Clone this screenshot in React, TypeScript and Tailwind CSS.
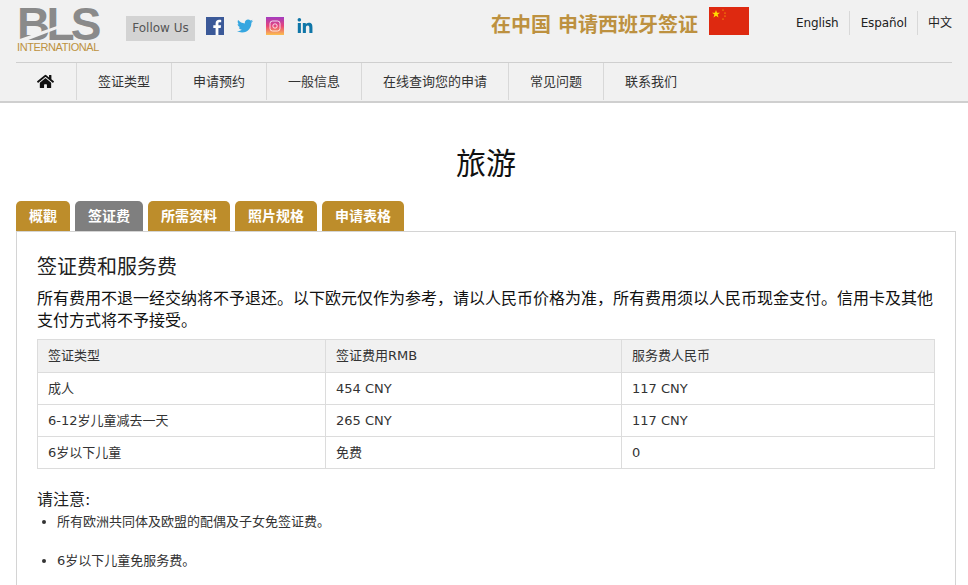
import { FaTwitter, FaLinkedinIn, FaHome } from 'react-icons/fa'

const font = "font-['DejaVu_Sans','Noto_Sans_CJK_SC',sans-serif]"

const navItems = ['签证类型', '申请预约', '一般信息', '在线查询您的申请', '常见问题', '联系我们']
const tabs = ['概觀', '签证费', '所需资料', '照片规格', '申请表格']
const rows = [
  ['成人', '454 CNY', '117 CNY'],
  ['6-12岁儿童减去一天', '265 CNY', '117 CNY'],
  ['6岁以下儿童', '免费', '0'],
]

function Logo() {
  return (
    <div className="relative w-[84px] h-[48px] mt-[6px] ml-[17px] shrink-0">
      <div className="h-[36px] text-[46px] leading-[36px] font-bold text-[#8a8a8a] tracking-[-3.8px] font-['Liberation_Sans',sans-serif]">
        BLS
      </div>
      <svg className="absolute left-0 top-[16px]" width="84" height="24" viewBox="0 0 84 24">
        <path d="M0 18 L40 4 L40 7 L6 20 L0 21 Z" fill="#f1f1f1" />
      </svg>
      <div className="text-[11px] leading-[11px] text-[#bd9140] tracking-[-0.4px] font-['Liberation_Sans',sans-serif]">
        INTERNATIONAL
      </div>
    </div>
  )
}

function Flag() {
  return (
    <svg width="40" height="28" viewBox="0 0 40 28" className="shrink-0">
      <rect width="40" height="28" fill="#de2910" />
      <polygon points="7,3 8,5.8 11,5.8 8.6,7.6 9.5,10.5 7,8.8 4.5,10.5 5.4,7.6 3,5.8 6,5.8" fill="#ffde00" />
      <circle cx="14" cy="3" r="0.6" fill="#ffde00" />
      <circle cx="16" cy="6" r="0.6" fill="#ffde00" />
      <circle cx="16" cy="9" r="0.6" fill="#ffde00" />
      <circle cx="14" cy="12" r="0.6" fill="#ffde00" />
    </svg>
  )
}

function Facebook() {
  return (
    <svg width="18" height="18" viewBox="0 0 18 18">
      <rect width="18" height="18" fill="#3b5998" />
      <path d="M12.4 18V11h2.3l.4-2.7h-2.7V6.6c0-.8.2-1.3 1.3-1.3h1.5V2.9c-.3 0-1.1-.1-2.1-.1-2.1 0-3.5 1.3-3.5 3.6v1.9H7.3V11h2.3v7z" fill="#fff" />
    </svg>
  )
}

function Instagram() {
  return (
    <svg width="18" height="18" viewBox="0 0 18 18">
      <defs>
        <linearGradient id="ig" x1="0" y1="0" x2="0" y2="1">
          <stop offset="0" stopColor="#a33bc0" />
          <stop offset="0.5" stopColor="#e8457a" />
          <stop offset="1" stopColor="#fbc14f" />
        </linearGradient>
      </defs>
      <rect width="18" height="18" fill="url(#ig)" />
      <rect x="4" y="4" width="10" height="10" rx="2.5" fill="none" stroke="#fff" strokeWidth="1" opacity="0.8" />
      <circle cx="9" cy="9" r="2.2" fill="none" stroke="#fff" strokeWidth="1" opacity="0.8" />
    </svg>
  )
}

export default function App() {
  return (
    <div className={`${font} h-[585px] overflow-hidden bg-white text-[#212121]`}>
      <header className="h-[103px] bg-[#f1f1f1] border-b-2 border-[#cfcfcf]">
        <div className="h-[62px] flex">
          <Logo />
          <div className="ml-[25px] mt-[16px] w-[69px] h-[25px] bg-[#d3d3d3] text-[12px] leading-[25px] text-center text-[#555] shrink-0">
            Follow Us
          </div>
          <div className="flex items-center gap-[12px] ml-[11px] mt-[17px] h-[18px] shrink-0">
            <Facebook />
            <FaTwitter className="w-[18px] h-[16px] text-[#35a6e0]" />
            <Instagram />
            <FaLinkedinIn className="w-[18px] h-[17px] text-[#0f76a8]" />
          </div>
          <div className="flex gap-[7px] ml-[177px] mt-[11px] text-[20px] leading-[26px] font-bold text-[#bd9140] whitespace-nowrap shrink-0 font-['Noto_Sans_CJK_SC',sans-serif]">
            <span>在中国</span>
            <span>申请西班牙签证</span>
          </div>
          <div className="ml-[11px] mt-[7px]">
            <Flag />
          </div>
          <div className="flex ml-[35px] mt-[11px] h-[24px] text-[12px] leading-[24px] tracking-[-0.1px] shrink-0">
            <span className="pl-[12px] pr-[10px] border-r border-[#d8d8d8]">English</span>
            <span className="pl-[11px] pr-[10px] border-r border-[#d8d8d8]">Español</span>
            <span className="pl-[10px]">中文</span>
          </div>
        </div>
        <nav className="mx-[16px] h-[38px] border-t border-[#cfcfcf] flex text-[13px] leading-[37px] text-[#333]">
          <div className="w-[61px] flex items-center justify-center border-r border-[#d8d8d8]">
            <FaHome className="w-[17px] h-[17px] text-[#111] -translate-x-px" />
          </div>
          {navItems.map((item, i) => (
            <div key={item} className={`px-[21px] ${i < navItems.length - 1 ? 'border-r border-[#d8d8d8]' : ''}`}>
              {item}
            </div>
          ))}
        </nav>
      </header>

      <main className="pl-[16px] pr-[12px]">
        <h1 className="mt-[38px] h-[46px] text-center text-[30px] leading-[46px] font-normal text-[#111]">旅游</h1>
        <div className="flex gap-[5px] mt-[14px]">
          {tabs.map((tab, i) => (
            <div
              key={tab}
              className={`h-[30px] px-[13px] rounded-t-[5px] text-[14px] leading-[30px] font-bold text-white ${i === 1 ? 'bg-[#7f7f7f]' : 'bg-[#bd8d2b]'}`}
            >
              {tab}
            </div>
          ))}
        </div>
        <section className="border border-[#d4d4d4] px-[20px] pt-[20px] pb-[40px]">
          <h2 className="text-[20px] leading-[30px] font-normal text-[#222]">签证费和服务费</h2>
          <p className="mt-[6px] text-[16px] leading-[22px] text-[#111]">
            所有费用不退一经交纳将不予退还。以下欧元仅作为参考，请以人民币价格为准，所有费用须以人民币现金支付。信用卡及其他支付方式将不予接受。
          </p>
          <table className="mt-[7px] w-full border-collapse text-[13px] text-[#333]">
            <thead>
              <tr className="bg-[#f1f1f1]">
                <th className="w-[288px] h-[33px] border border-[#dcdcdc] px-[10px] text-left font-normal">签证类型</th>
                <th className="w-[296px] border border-[#dcdcdc] px-[10px] text-left font-normal">签证费用RMB</th>
                <th className="border border-[#dcdcdc] px-[10px] text-left font-normal">服务费人民币</th>
              </tr>
            </thead>
            <tbody>
              {rows.map((row) => (
                <tr key={row[0]}>
                  {row.map((cell) => (
                    <td key={cell} className="h-[32px] border border-[#dcdcdc] px-[10px]">
                      {cell}
                    </td>
                  ))}
                </tr>
              ))}
            </tbody>
          </table>
          <p className="mt-[20px] text-[16px] leading-[22px] text-[#222]">请注意:</p>
          <ul className="mt-[1px] list-disc pl-[20px] text-[13px] text-[#333]">
            <li className="h-[39px] leading-[20px]">所有欧洲共同体及欧盟的配偶及子女免签证费。</li>
            <li className="leading-[20px]">6岁以下儿童免服务费。</li>
          </ul>
        </section>
      </main>
    </div>
  )
}
